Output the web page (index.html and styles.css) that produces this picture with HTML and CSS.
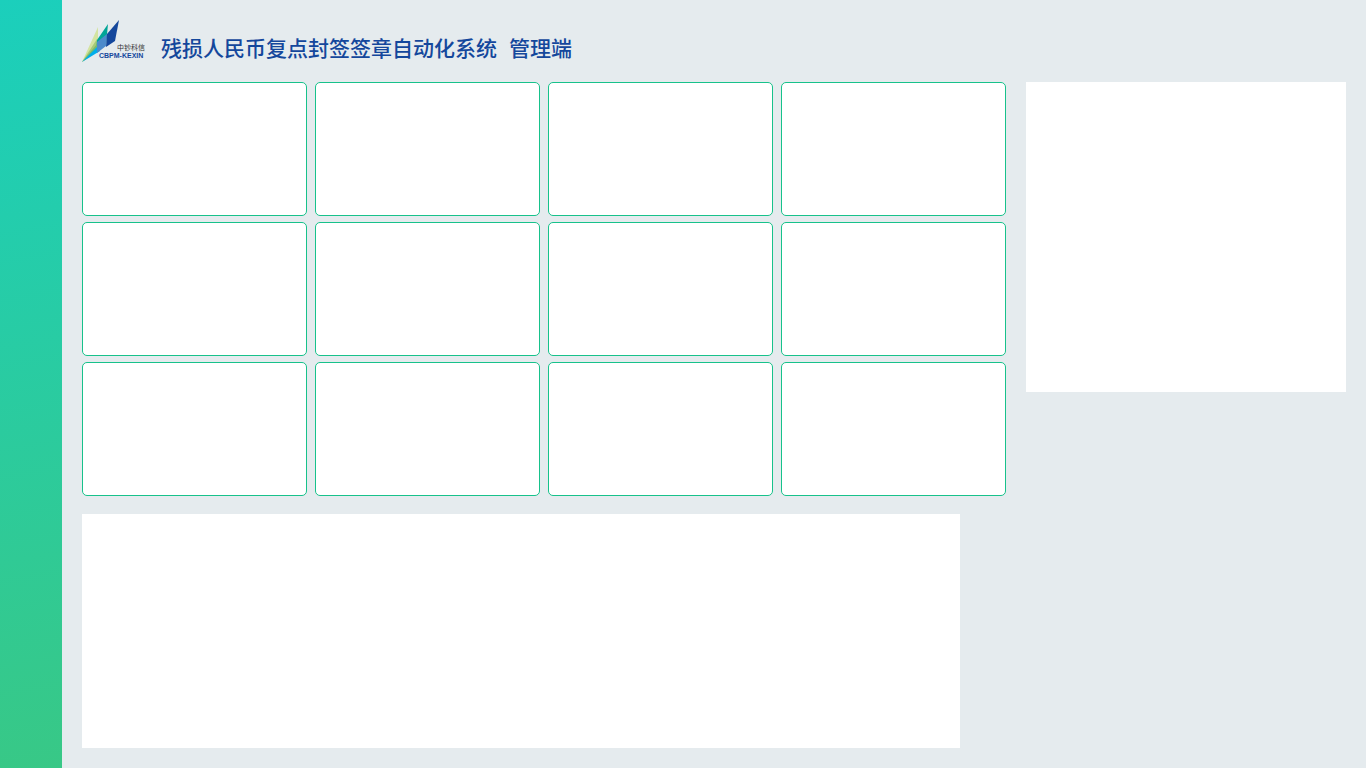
FILE: index.html
```html
<!DOCTYPE html>
<html lang="zh-CN">
<head>
<meta charset="utf-8">
<meta name="viewport" content="width=device-width, initial-scale=1">
<title>残损人民币复点封签签章自动化系统 管理端</title>
<link rel="stylesheet" href="styles.css">
</head>
<body>
<div class="app">
  <nav class="sidebar" aria-label="主导航"></nav>
  <div class="page">
    <header class="header">
      <svg class="logo" viewBox="0 0 64 42" role="img" aria-label="中钞科信 CBPM-KEXIN">
        <path fill="#d3e4a0" d="M0 42 16 7V25Z"/>
        <path fill="#a5c978" d="M0 42 15 19V30Z"/>
        <path fill="#00a496" d="M15 20 26 4 24 25 14 32Z"/>
        <path fill="#79b96b" d="M0 42 15 24V31Z"/>
        <path fill="#00aeea" d="M0 42 15 27 18 31Z"/>
        <path fill="#4b8acb" d="M15 22 25 14 24 26 15 33Z"/>
        <path fill="#14479c" d="M25 14 37 0 33 21 24 27Z"/>
        <text class="logo-cn" x="35" y="30">中钞科信</text>
        <text class="logo-en" x="17" y="38">CBPM-KEXIN</text>
      </svg>
      <h1 class="title"><span>残损人民币复点封签签章自动化系统</span><span>管理端</span></h1>
    </header>
    <div class="content">
      <main class="main">
        <section class="cards">
          <article class="card"></article>
          <article class="card"></article>
          <article class="card"></article>
          <article class="card"></article>
          <article class="card"></article>
          <article class="card"></article>
          <article class="card"></article>
          <article class="card"></article>
          <article class="card"></article>
          <article class="card"></article>
          <article class="card"></article>
          <article class="card"></article>
        </section>
        <section class="summary"></section>
      </main>
      <aside class="details"></aside>
    </div>
  </div>
</div>
</body>
</html>
```
FILE: styles.css
```css
* {
  box-sizing: border-box;
}

body {
  margin: 0;
  background: #e5ebee;
  font-family: "Noto Sans CJK SC", sans-serif;
}

.app {
  display: flex;
  min-height: 100vh;
}

.sidebar {
  flex: 0 0 62px;
  background: linear-gradient(170deg, #1bcfbc, #38c886);
}

.page {
  flex: 1;
  display: flex;
  flex-direction: column;
  gap: 20px;
  min-width: 0;
  padding: 20px;
}

.header {
  display: flex;
  align-items: flex-end;
  gap: 15px;
}

.logo {
  flex: none;
  width: 64px;
  height: 42px;
  overflow: visible;
}

.logo-cn {
  fill: #333;
  font-size: 7px;
}

.logo-en {
  fill: #14479c;
  font-family: "Liberation Sans", Arial, sans-serif;
  font-size: 7px;
  font-weight: 700;
}

.title {
  display: flex;
  gap: 12px;
  margin: 0;
  color: #14479c;
  font-size: 21px;
  font-weight: 500;
  line-height: 30px;
}

.content {
  flex: 1;
  display: flex;
  gap: 20px;
}

.main {
  flex: 1;
  display: flex;
  flex-direction: column;
  gap: 18px;
  min-width: 0;
}

.cards {
  flex: 414;
  display: grid;
  grid-template-columns: repeat(4, 1fr);
  grid-auto-rows: 1fr;
  gap: 6px 8px;
}

.card {
  border: 1px solid #17c28b;
  border-radius: 5px;
  background: #fff;
}

.summary {
  flex: 234;
  width: 95%;
  background: #fff;
}

.details {
  flex: 0 0 320px;
  align-self: flex-start;
  min-height: 310px;
  background: #fff;
}
```
